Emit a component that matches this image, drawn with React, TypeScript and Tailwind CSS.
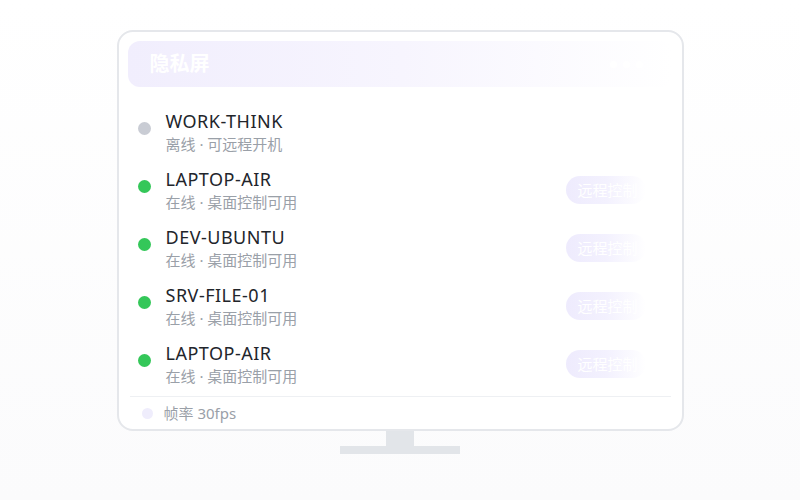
import React from "react"

type Device = {
  name: string
  online: boolean
}

const DEVICES: Device[] = [
  { name: "WORK-THINK", online: false },
  { name: "LAPTOP-AIR", online: true },
  { name: "DEV-UBUNTU", online: true },
  { name: "SRV-FILE-01", online: true },
  { name: "LAPTOP-AIR", online: true },
]

const font = { fontFamily: '"Noto Sans", "Noto Sans CJK SC", sans-serif' }

function DeviceRow({ device }: { device: Device }) {
  return (
    <div className="flex items-center h-[44px] shrink-0">
      <span
        className={`self-start mt-[12px] w-[13px] h-[13px] rounded-full ${device.online ? "bg-[#34c759]" : "bg-[#c9ccd4]"}`}
      />
      <div className="ml-[15px] flex flex-col gap-[2px]">
        <span className="text-[18px] leading-[22px] text-[#22252b] tracking-[0.5px]">{device.name}</span>
        <span className="text-[15px] leading-[20px] text-[#9aa0a8]">
          {device.online ? "在线 · 桌面控制可用" : "离线 · 可远程开机"}
        </span>
      </div>
      {device.online && (
        <button className="ml-auto h-[28px] w-[80px] pl-[12px] rounded-full bg-gradient-to-r from-[#eeebfd] via-[#f3f1fe] to-white text-left text-[15px] text-white whitespace-nowrap overflow-hidden">
          远程控制
        </button>
      )}
    </div>
  )
}

export default function App() {
  return (
    <div
      className="w-[800px] h-[500px] bg-gradient-to-b from-white to-[#fbfbfc] flex flex-col items-center pt-[30px]"
      style={font}
    >
      {/* Screen */}
      <div className="w-[567px] h-[401px] rounded-[16px] border-2 border-[#e5e7eb] bg-white px-[9px] pt-[9px] flex flex-col">
        <div className="h-[46px] shrink-0 rounded-[12px] bg-gradient-to-r from-[#f1eefd] via-[#f7f5fe] to-white flex items-center pl-[22px] pr-[30px]">
          <span className="text-[20px] font-bold text-white">隐私屏</span>
          <div className="ml-auto flex gap-[6px]">
            <span className="w-[7px] h-[7px] rounded-full bg-white" />
            <span className="w-[7px] h-[7px] rounded-full bg-white" />
            <span className="w-[7px] h-[7px] rounded-full bg-white" />
          </div>
        </div>

        <div className="flex flex-col gap-[14px] pl-[10px] pr-[27px] mt-[23px]">
          {DEVICES.map((d, i) => (
            <DeviceRow key={i} device={d} />
          ))}
        </div>

        <div className="mt-[10px] mx-[2px] border-t border-[#eef0f3] flex items-center h-[33px] shrink-0 pl-[12px]">
          <span className="w-[11px] h-[11px] rounded-full bg-[#efedfc]" />
          <span className="ml-[11px] text-[15px] text-[#9aa0a8]">帧率 30fps</span>
        </div>
      </div>

      {/* Stand */}
      <div className="w-[28px] h-[15px] bg-[#e2e5e9]" />
      <div className="w-[120px] h-[8px] bg-[#e2e5e9]" />
    </div>
  )
}
